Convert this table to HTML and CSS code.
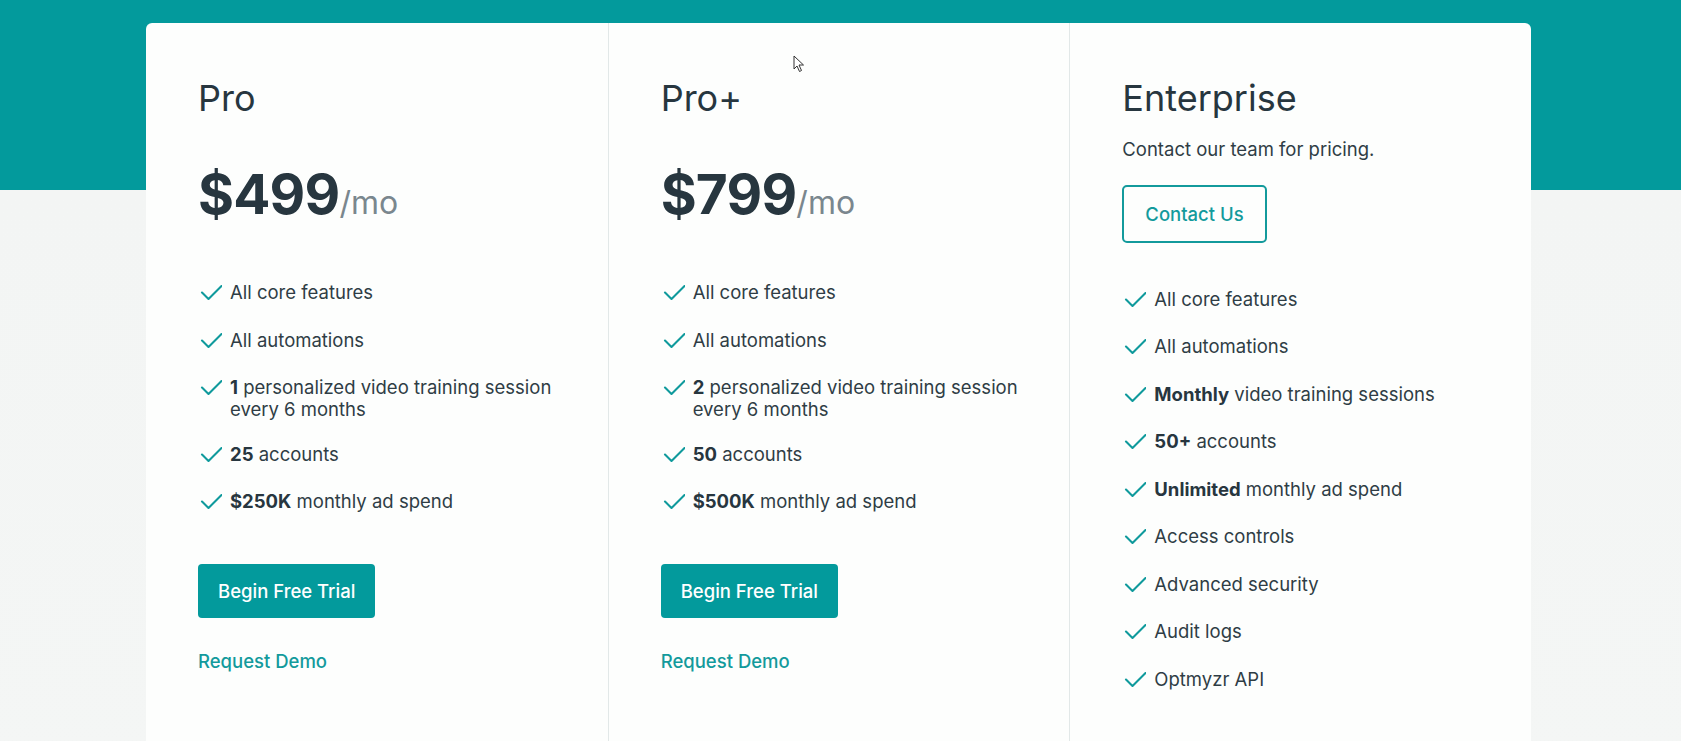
FILE: index.html
```html
<!DOCTYPE html>
<html lang="en">
<head>
<meta charset="utf-8">
<title>Pricing</title>
<link rel="stylesheet" href="styles.css">
</head>
<body>
<main class="pricing">
  <section class="plan">
    <h2 class="plan-name">Pro</h2>
    <div class="price"><span class="amount">$499</span><span class="period">/mo</span></div>
    <ul class="features">
      <li><svg class="check" viewBox="0 0 24 26"><path d="M4 12.5 L10.5 19 L23.5 6"/></svg><span>All core features</span></li>
      <li><svg class="check" viewBox="0 0 24 26"><path d="M4 12.5 L10.5 19 L23.5 6"/></svg><span>All automations</span></li>
      <li><svg class="check" viewBox="0 0 24 26"><path d="M4 12.5 L10.5 19 L23.5 6"/></svg><span><b>1</b> personalized video training session every 6 months</span></li>
      <li><svg class="check" viewBox="0 0 24 26"><path d="M4 12.5 L10.5 19 L23.5 6"/></svg><span><b>25</b> accounts</span></li>
      <li><svg class="check" viewBox="0 0 24 26"><path d="M4 12.5 L10.5 19 L23.5 6"/></svg><span><b>$250K</b> monthly ad spend</span></li>
    </ul>
    <a class="btn-primary" href="#">Begin Free Trial</a>
    <a class="link" href="#">Request Demo</a>
  </section>
  <section class="plan">
    <h2 class="plan-name">Pro+</h2>
    <div class="price"><span class="amount">$799</span><span class="period">/mo</span></div>
    <ul class="features">
      <li><svg class="check" viewBox="0 0 24 26"><path d="M4 12.5 L10.5 19 L23.5 6"/></svg><span>All core features</span></li>
      <li><svg class="check" viewBox="0 0 24 26"><path d="M4 12.5 L10.5 19 L23.5 6"/></svg><span>All automations</span></li>
      <li><svg class="check" viewBox="0 0 24 26"><path d="M4 12.5 L10.5 19 L23.5 6"/></svg><span><b>2</b> personalized video training session every 6 months</span></li>
      <li><svg class="check" viewBox="0 0 24 26"><path d="M4 12.5 L10.5 19 L23.5 6"/></svg><span><b>50</b> accounts</span></li>
      <li><svg class="check" viewBox="0 0 24 26"><path d="M4 12.5 L10.5 19 L23.5 6"/></svg><span><b>$500K</b> monthly ad spend</span></li>
    </ul>
    <a class="btn-primary" href="#">Begin Free Trial</a>
    <a class="link" href="#">Request Demo</a>
  </section>
  <section class="plan">
    <h2 class="plan-name">Enterprise</h2>
    <p class="note">Contact our team for pricing.</p>
    <a class="btn-outline" href="#">Contact Us</a>
    <ul class="features features-ent">
      <li><svg class="check" viewBox="0 0 24 26"><path d="M4 12.5 L10.5 19 L23.5 6"/></svg><span>All core features</span></li>
      <li><svg class="check" viewBox="0 0 24 26"><path d="M4 12.5 L10.5 19 L23.5 6"/></svg><span>All automations</span></li>
      <li><svg class="check" viewBox="0 0 24 26"><path d="M4 12.5 L10.5 19 L23.5 6"/></svg><span><b>Monthly</b> video training sessions</span></li>
      <li><svg class="check" viewBox="0 0 24 26"><path d="M4 12.5 L10.5 19 L23.5 6"/></svg><span><b>50+</b> accounts</span></li>
      <li><svg class="check" viewBox="0 0 24 26"><path d="M4 12.5 L10.5 19 L23.5 6"/></svg><span><b>Unlimited</b> monthly ad spend</span></li>
      <li><svg class="check" viewBox="0 0 24 26"><path d="M4 12.5 L10.5 19 L23.5 6"/></svg><span>Access controls</span></li>
      <li><svg class="check" viewBox="0 0 24 26"><path d="M4 12.5 L10.5 19 L23.5 6"/></svg><span>Advanced security</span></li>
      <li><svg class="check" viewBox="0 0 24 26"><path d="M4 12.5 L10.5 19 L23.5 6"/></svg><span>Audit logs</span></li>
      <li><svg class="check" viewBox="0 0 24 26"><path d="M4 12.5 L10.5 19 L23.5 6"/></svg><span>Optmyzr API</span></li>
    </ul>
  </section>
  <svg class="cursor" viewBox="0 0 12 18"><path d="M1 1 L1 14 L4 11 L6.5 16.5 L8.5 15.5 L6 10 L10.5 10 Z"/></svg>
</main>
</body>
</html>
```

FILE: styles.css
```css
* { box-sizing: border-box; }
html, body { margin: 0; padding: 0; }
body {
  font-family: Inter, "Noto Sans", "Liberation Sans", sans-serif;
  color: #2b3a42;
  background: linear-gradient(#039a9c 0, #039a9c 190px, #f3f5f4 190px, #f4f6f5 100%);
  min-height: 100vh;
  overflow: hidden;
}
.pricing {
  position: relative;
  width: 1385px;
  margin: 23px 0 0 146px;
  display: grid;
  grid-template-columns: 1fr 1fr 1fr;
  background: #fdfefd;
  border-radius: 6px 6px 0 0;
}
.plan {
  display: flex;
  flex-direction: column;
  align-items: flex-start;
  padding: 54px 40px 90px 52px;
  border-left: 1px solid #e2e8e8;
}
.plan:first-child { border-left: none; }
.plan-name {
  margin: 0;
  font-size: 36px;
  line-height: 1.2;
  font-weight: 400;
  color: #27363f;
}
.price {
  margin-top: 41px;
  display: flex;
  align-items: baseline;
  line-height: 1.2;
}
.amount {
  font-size: 55px;
  font-weight: 700;
  color: #27363f;
  letter-spacing: -0.8px;
}
.period {
  font-size: 32px;
  color: #7a878e;
  font-weight: 400;
}
.features {
  list-style: none;
  margin: 53px 0 0;
  padding: 0;
  display: flex;
  flex-direction: column;
  gap: 21.5px;
}
.features-ent { margin-top: 44px; }
.features li {
  display: flex;
  align-items: flex-start;
  gap: 8px;
  font-size: 18.5px;
  line-height: 22px;
  color: #2f3d45;
}
.features li span { padding-top: 1px; }
.features b { font-weight: 700; color: #27363f; }
.check {
  flex: none;
  width: 24px;
  height: 26px;
  fill: none;
  stroke: #0f9a9c;
  stroke-width: 2.1;
  stroke-linecap: round;
  stroke-linejoin: round;
}
.btn-primary {
  margin-top: 49px;
  height: 54px;
  padding: 0 20px;
  display: inline-flex;
  align-items: center;
  background: #039a9c;
  color: #fff;
  border-radius: 4px;
  font-size: 18.5px;
  font-weight: 500;
  text-decoration: none;
}
.link {
  margin-top: 32px;
  color: #139a9c;
  font-size: 18.5px;
  line-height: 22.5px;
  font-weight: 500;
  text-decoration: none;
}
.note {
  margin: 18px 0 0;
  font-size: 18.5px;
  line-height: 22.5px;
  color: #2f3d45;
}
.btn-outline {
  margin-top: 24px;
  height: 58px;
  padding: 0 21px;
  display: inline-flex;
  align-items: center;
  border: 2px solid #139a9c;
  border-radius: 5px;
  color: #139a9c;
  font-size: 18.5px;
  font-weight: 500;
  text-decoration: none;
}
.cursor {
  position: absolute;
  left: 647px;
  top: 32px;
  width: 12px;
  height: 18px;
  fill: #fff;
  stroke: #333;
  stroke-width: 1;
}
```
